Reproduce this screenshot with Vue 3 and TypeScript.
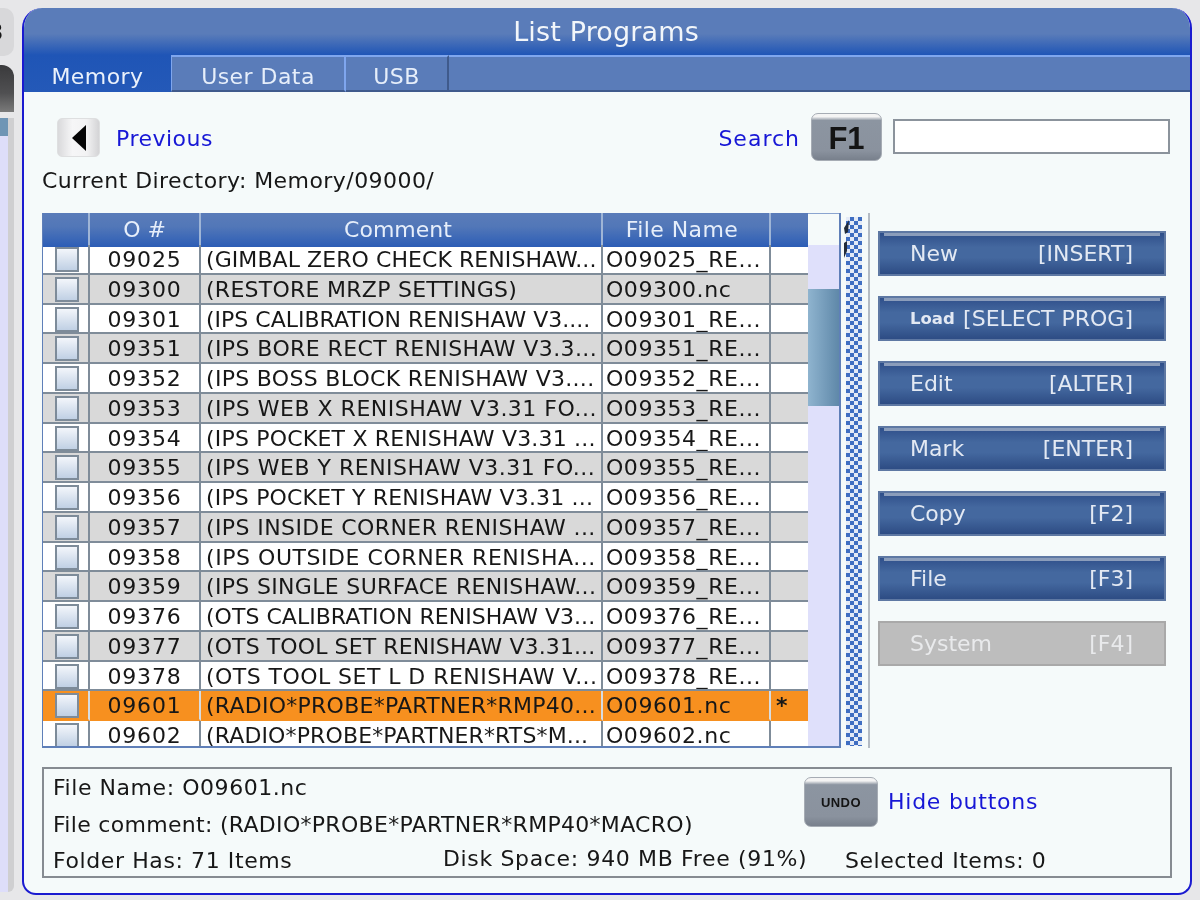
<script setup lang="ts">
interface Row { num: string; comment: string; file: string; ls: number; mark?: string; selected?: boolean }
const rows: Row[] = [
  { num: '09025', comment: '(GIMBAL ZERO CHECK RENISHAW...', file: 'O09025_RE...', ls: 0.07 },
  { num: '09300', comment: '(RESTORE MRZP SETTINGS)', file: 'O09300.nc', ls: 0.26 },
  { num: '09301', comment: '(IPS CALIBRATION RENISHAW V3....', file: 'O09301_RE...', ls: 0 },
  { num: '09351', comment: '(IPS BORE RECT RENISHAW V3.3...', file: 'O09351_RE...', ls: 0.4 },
  { num: '09352', comment: '(IPS BOSS BLOCK RENISHAW V3....', file: 'O09352_RE...', ls: 0.3 },
  { num: '09353', comment: '(IPS WEB X RENISHAW V3.31 FO...', file: 'O09353_RE...', ls: 0.5 },
  { num: '09354', comment: '(IPS POCKET X RENISHAW V3.31 ...', file: 'O09354_RE...', ls: 0.2 },
  { num: '09355', comment: '(IPS WEB Y RENISHAW V3.31 FO...', file: 'O09355_RE...', ls: 0.5 },
  { num: '09356', comment: '(IPS POCKET Y RENISHAW V3.31 ...', file: 'O09356_RE...', ls: 0.17 },
  { num: '09357', comment: '(IPS INSIDE CORNER RENISHAW ...', file: 'O09357_RE...', ls: 0.4 },
  { num: '09358', comment: '(IPS OUTSIDE CORNER RENISHA...', file: 'O09358_RE...', ls: 0.55 },
  { num: '09359', comment: '(IPS SINGLE SURFACE RENISHAW...', file: 'O09359_RE...', ls: 0.33 },
  { num: '09376', comment: '(OTS CALIBRATION RENISHAW V3...', file: 'O09376_RE...', ls: 0.03 },
  { num: '09377', comment: '(OTS TOOL SET RENISHAW V3.31...', file: 'O09377_RE...', ls: 0.1 },
  { num: '09378', comment: '(OTS TOOL SET L D RENISHAW V...', file: 'O09378_RE...', ls: 0.45 },
  { num: '09601', comment: '(RADIO*PROBE*PARTNER*RMP40...', file: 'O09601.nc', ls: 0.25, mark: '*', selected: true },
  { num: '09602', comment: '(RADIO*PROBE*PARTNER*RTS*M...', file: 'O09602.nc', ls: 0.13 },
]
const actions = [
  { label: 'New', key: '[INSERT]' },
  { label: 'Load', key: '[SELECT PROG]', small: true },
  { label: 'Edit', key: '[ALTER]' },
  { label: 'Mark', key: '[ENTER]' },
  { label: 'Copy', key: '[F2]' },
  { label: 'File', key: '[F3]' },
  { label: 'System', key: '[F4]', disabled: true },
]
</script>

<template>
  <div class="page">
    <aside class="side">
      <div class="side-key"><span>8</span></div>
      <div class="side-dark"></div>
      <div class="side-track"><div class="side-blue"></div></div>
    </aside>

    <main class="panel">
      <header class="title">List Programs</header>
      <nav class="tabs">
        <div class="tab active">Memory</div>
        <div class="tab t2">User Data</div>
        <div class="tab t3">USB</div>
        <div class="tab-fill"></div>
      </nav>

      <section class="content">
        <div class="top-row">
          <button class="back" aria-label="Previous">
            <svg width="16" height="28" viewBox="0 0 16 28"><path d="M15 1 L1 14 L15 27 Z" fill="#050505" /></svg>
          </button>
          <span class="link prev">Previous</span>
          <span class="link search">Search</span>
          <div class="hardkey f1">F1</div>
          <div class="search-input"></div>
        </div>
        <div class="dir">Current Directory: Memory/09000/</div>

        <div class="main-row">
          <div class="table">
            <div class="thead">
              <div class="th"></div>
              <div class="th">O #</div>
              <div class="th th-comment">Comment</div>
              <div class="th th-file">File Name</div>
              <div class="th"></div>
            </div>
            <div class="tbody">
              <div
                v-for="(r, i) in rows"
                :key="r.num"
                class="row"
                :class="{ alt: i % 2 === 1, selected: r.selected }"
              >
                <div class="cell check"><span class="box"></span></div>
                <div class="cell num">{{ r.num }}</div>
                <div class="cell txt" :style="{ letterSpacing: r.ls + 'px' }">{{ r.comment }}</div>
                <div class="cell file">{{ r.file }}</div>
                <div class="cell mark">{{ r.mark }}</div>
              </div>
            </div>
            <div class="scroll">
              <div class="scroll-head"></div>
              <div class="scroll-track"><div class="thumb"></div></div>
            </div>
          </div>

          <div class="strip">
            <svg class="arrows" width="5" height="40" viewBox="0 0 5 40">
              <path d="M5 1 L0 9 L1 15 L4 13 Z M0 24 L3 22 L3 32 L0 39 Z" fill="#222c3a" />
            </svg>
          </div>
          <div class="divider"></div>

          <div class="actions">
            <div v-for="a in actions" :key="a.label" class="action" :class="{ disabled: a.disabled }">
              <span :class="{ small: a.small }">{{ a.label }}</span>
              <span>{{ a.key }}</span>
            </div>
          </div>
        </div>

        <div class="info">
          <div class="info-top">
            <div class="info-lines">
              <div class="l1">File Name: O09601.nc</div>
              <div class="l2">File comment: (RADIO*PROBE*PARTNER*RMP40*MACRO)</div>
            </div>
            <div class="hardkey undo">UNDO</div>
            <span class="link hide">Hide buttons</span>
          </div>
          <div class="info-bottom">
            <span class="folder">Folder Has: 71 Items</span>
            <span class="disk">Disk Space: 940 MB Free (91%)</span>
            <span class="sel">Selected Items: 0</span>
          </div>
        </div>
      </section>
    </main>
  </div>
</template>

<style scoped>
.page {
  width: 1200px;
  height: 900px;
  overflow: hidden;
  display: flex;
  background: #e7e7e9;
  font-family: "DejaVu Sans", sans-serif;
  font-size: 22px;
  color: #171717;
  filter: blur(0.45px);
}
.side {
  width: 14px;
  flex: none;
  padding-top: 8px;
  display: flex;
  flex-direction: column;
}
.side-key {
  height: 48px;
  background: #d8d8da;
  border-radius: 0 10px 10px 0;
  overflow: hidden;
  font-family: "Liberation Sans", sans-serif;
  font-weight: 700;
  font-size: 24px;
  line-height: 48px;
}
.side-key span {
  display: block;
  margin-left: -11px;
}
.side-dark {
  height: 47px;
  margin-top: 9px;
  border-radius: 0 12px 0 0;
  background: linear-gradient(#3a3a3c, #505052 60%, #7a7a7a);
}
.side-track {
  margin-top: 6px;
  flex: 1;
  margin-bottom: 8px;
  background: #dedefa;
  border-right: 6px solid #cfcfd1;
  border-radius: 0 0 6px 0;
}
.side-blue {
  height: 18px;
  background: #6f95b5;
}
.panel {
  width: 1170px;
  height: 887px;
  margin: 8px 0 0 8px;
  box-sizing: border-box;
  display: flex;
  flex-direction: column;
  border: 2px solid #1a1ad0;
  border-top: none;
  border-radius: 20px 20px 14px 14px;
  overflow: hidden;
  background: #f5fafa;
}
.title {
  height: 47px;
  flex: none;
  margin: 0 -2px;
  background: linear-gradient(#5a7cb9 0, #5a7cb9 55%, #1f55b6 100%);
  color: #f2f6fa;
  text-align: center;
  font-size: 27px;
  line-height: 47px;
  letter-spacing: 0.15px;
  padding-right: 2px;
}
.tabs {
  height: 37px;
  flex: none;
  display: flex;
  color: #e6eefa;
  letter-spacing: 0.45px;
}
.tab {
  box-sizing: border-box;
  text-align: center;
  line-height: 43px;
}
.active {
  width: 147px;
  background: linear-gradient(#1f55b6, #2459b8);
  color: #eaf1fb;
}
.t2, .t3, .tab-fill {
  background: #5a7cb9;
  border-top: 2px solid #7fa6ee;
  border-bottom: 2px solid #3f5a8c;
  line-height: 40px;
}
.t2 {
  width: 175px;
  border-left: 1px solid #7fa6ee;
  border-right: 2px solid #7fa6ee;
}
.t3 {
  width: 103px;
  border-right: 2px solid #3f5a8c;
}
.tab-fill { flex: 1; }
.content {
  flex: 1;
  min-height: 0;
  padding: 0 20px 0 18px;
}
.top-row {
  height: 69px;
  padding-top: 21px;
  box-sizing: border-box;
  display: flex;
  align-items: flex-start;
}
.back {
  width: 43px;
  height: 39px;
  margin: 5px 0 0 15px;
  padding: 0;
  border: 1px solid #dedfe0;
  border-radius: 5px;
  background: linear-gradient(90deg, #d9d9db, #f6f6f7 35%, #f2f2f3 70%, #d4d4d6);
  display: flex;
  align-items: center;
  justify-content: center;
}
.link { color: #1717d6; }
.prev { margin: 13px 0 0 16px; line-height: 26px; letter-spacing: 0.5px; }
.search { margin: 13px 0 0 auto; line-height: 26px; letter-spacing: 1px; }
.hardkey {
  box-sizing: border-box;
  font-family: "Liberation Sans", sans-serif;
  font-weight: 700;
  color: #141414;
  text-align: center;
  background: linear-gradient(#f4f4f4 0, #f4f4f4 6%, #8c95a1 14%, #8a929e 80%, #78808c 100%);
  border: 1px solid #a6acb4;
  border-radius: 7px;
}
.f1 {
  width: 71px;
  height: 48px;
  margin-left: 11px;
  font-size: 31px;
  line-height: 50px;
}
.search-input {
  width: 277px;
  height: 35px;
  margin: 6px 0 0 11px;
  box-sizing: border-box;
  background: #fff;
  border: 2px solid #8b939c;
}
.dir {
  height: 52px;
  line-height: 40px;
  letter-spacing: 0.44px;
}
.main-row {
  display: flex;
  height: 535px;
  align-items: stretch;
}
.table {
  width: 799px;
  height: 535px;
  flex: none;
  position: relative;
  box-sizing: border-box;
  border: 1px solid #5f7fb8;
  border-width: 0 2px 2px 1px;
  overflow: hidden;
  background: #fff;
}
.thead, .row {
  display: grid;
  grid-template-columns: 47px 111px 402px 168px 38px;
}
.thead {
  height: 32px;
  color: #e6eefa;
}
.th {
  box-sizing: border-box;
  text-align: center;
  line-height: 34px;
  background: linear-gradient(#5a7cb9, #5277b8 40%, #2c5db6);
  border-right: 2px solid #9fb5d6;
}
.th:last-child { border-right: none; }
.th-comment { padding-right: 6px; }
.th-file { padding-right: 8px; letter-spacing: 0.4px; }
.tbody { width: 766px; }
.row {
  height: 29.75px;
  background: #fff;
}
.row.alt { background: #d9d9d9; }
.row.selected { background: #f7901f; }
.cell {
  box-sizing: border-box;
  height: 100%;
  border-right: 2px solid #7f8c99;
  border-bottom: 2px solid #7f8c99;
  line-height: 29px;
  white-space: nowrap;
  overflow: hidden;
}
.selected .cell { border-bottom-color: #f7901f; border-right-color: #d7dce0; }
.cell:last-child { border-right: none; }
.check { padding: 2px 0 0 12px; }
.box {
  display: block;
  width: 24px;
  height: 25px;
  box-sizing: border-box;
  background: linear-gradient(#f3f6fb, #c0d0e4);
  border: 2px solid #7d8b99;
}
.num { text-align: center; letter-spacing: 0.8px; }
.txt { padding-left: 5px; }
.file { padding-left: 3px; letter-spacing: 0.55px; }
.mark { padding-left: 5px; font-weight: 700; }
.scroll {
  position: absolute;
  right: 0;
  top: 0;
  bottom: 0;
  width: 31px;
  background: #dfe0fb;
}
.scroll-head {
  height: 32px;
  box-sizing: border-box;
  background: #f5fafa;
  border-top: 1px solid #8aa4d0;
}
.scroll-track { height: 100%; padding-top: 44px; box-sizing: border-box; }
.thumb {
  height: 117px;
  background: linear-gradient(90deg, #8fb4cf, #5f88a9);
}
.strip {
  width: 16px;
  flex: none;
  margin: 4px 0 2px 5px;
  position: relative;
  background-color: #fff;
  background-image: conic-gradient(#3f6ec2 25%, #e4eaf6 0 50%, #3f6ec2 0 75%, #e4eaf6 0);
  background-size: 8px 8px;
}
.arrows { position: absolute; left: -2px; top: 2px; }
.divider {
  width: 2px;
  flex: none;
  margin-left: 6px;
  background: #b4bbc3;
}
.actions {
  margin: 18px 0 0 8px;
  display: flex;
  flex-direction: column;
  gap: 20px;
}
.action {
  width: 288px;
  height: 45px;
  box-sizing: border-box;
  padding: 0 31px 0 30px;
  display: flex;
  justify-content: space-between;
  align-items: center;
  color: #e3e9f3;
  border: 2px solid #5e78a3;
  background:
    linear-gradient(#8b9dbb, #8b9dbb) center top / calc(100% - 8px) 3px no-repeat,
    linear-gradient(#2f4f8a, #44689f 35%, #44689f 60%, #2d4c84);
}
.action .small { font-size: 16.5px; font-weight: 700; }
.action.disabled {
  background: #bdbdbd;
  border: 2px solid #a9a9a9;
  color: #e9eaec;
}
.info {
  margin-top: 19px;
  width: 1130px;
  height: 111px;
  box-sizing: border-box;
  border: 2px solid #868b91;
  padding: 0 0 0 9px;
}
.info-top {
  height: 76px;
  display: flex;
}
.info-lines { width: 751px; flex: none; }
.l1 { line-height: 38px; letter-spacing: 0.55px; }
.l2 { line-height: 36px; letter-spacing: 0.3px; }
.undo {
  width: 74px;
  height: 50px;
  margin-top: 8px;
  font-size: 13px;
  line-height: 50px;
  letter-spacing: 0.4px;
}
.hide { margin: 20px 0 0 10px; line-height: 26px; letter-spacing: 0.75px; }
.info-bottom {
  display: flex;
  line-height: 32px;
}
.folder { width: 390px; letter-spacing: 0.6px; }
.disk { width: 402px; margin-top: -2px; letter-spacing: 0.65px; }
.sel { letter-spacing: 0.53px; }
</style>
